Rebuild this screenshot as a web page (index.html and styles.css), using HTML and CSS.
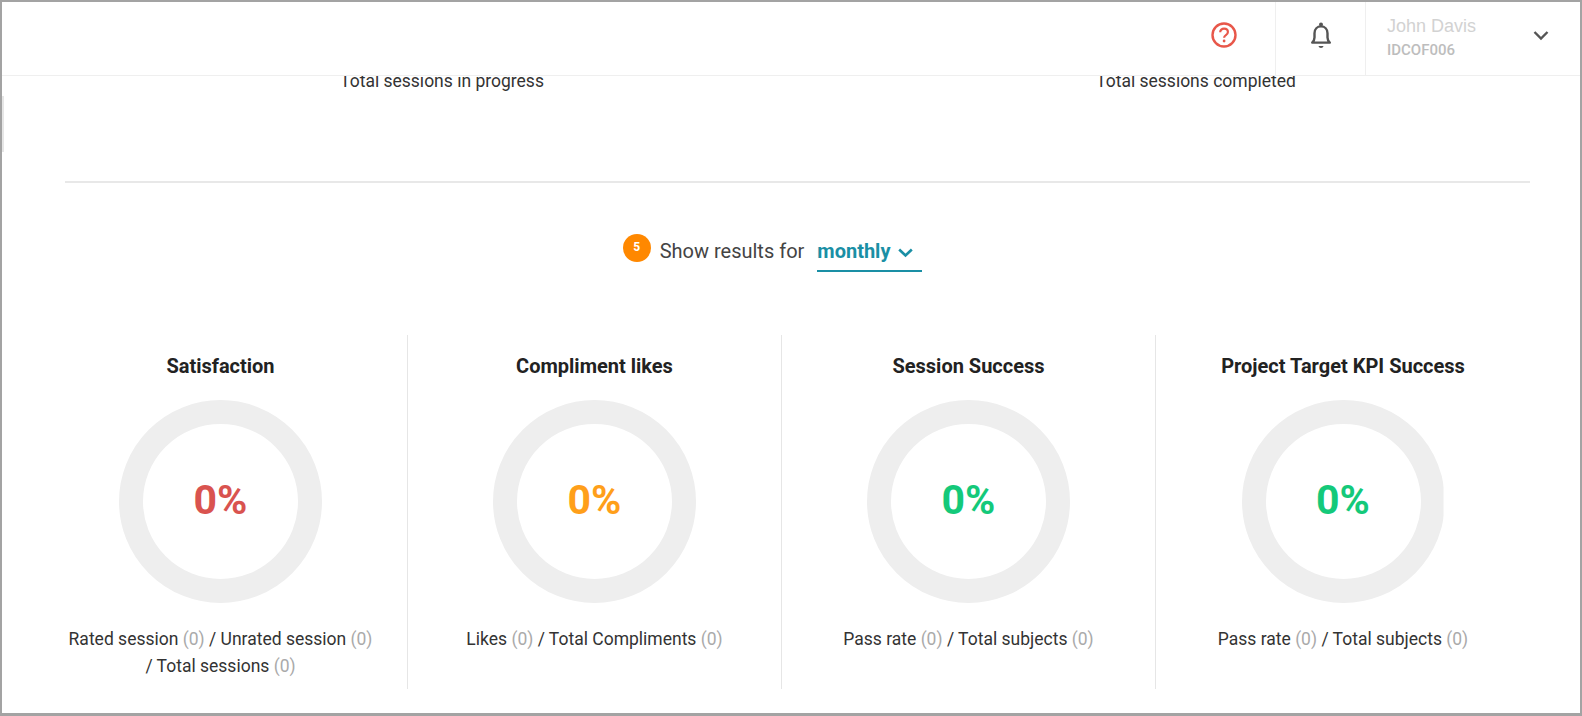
FILE: index.html
```html
<!DOCTYPE html>
<html lang="en">
<head>
    <meta charset="UTF-8">
    <meta name="viewport" content="width=device-width, initial-scale=1.0">
    <title>Dashboard</title>
    <link rel="stylesheet" href="styles.css">
</head>
<body>
<div class="frame">

    <div class="topbar">
        <div class="topbar-cell help-cell">
            <svg width="28" height="28" viewBox="0 0 28 28" fill="none">
                <circle cx="14" cy="14" r="11.5" stroke="#e8574a" stroke-width="2.4"/>
                <path d="M10.2 11.2c0-2.2 1.7-3.6 3.9-3.6s3.8 1.4 3.8 3.4c0 1.5-.8 2.3-2 3.1-1.1.7-1.8 1.3-1.8 2.7" stroke="#e8574a" stroke-width="2.2"/>
                <circle cx="14.1" cy="20" r="1.4" fill="#e8574a"/>
            </svg>
        </div>
        <div class="topbar-cell bell-cell">
            <svg width="24" height="28" viewBox="0 0 24 28" fill="none">
                <circle cx="12" cy="3.4" r="2" fill="#555"/>
                <path d="M3.2 21.6c1.5-1.4 2.300-2.600 2.300-5v-4.400c0-4 2.800-6.800 6.500-6.800s6.500 2.800 6.500 6.800v4.400c0 2.400.8 3.600 2.300 5z" stroke="#555" stroke-width="2.400" stroke-linejoin="round"/>
                <path d="M9.500 25h5c-.3 1.300-1.200 2-2.500 2s-2.200-.7-2.500-2z" fill="#555"/>
            </svg>
        </div>
        <div class="user-cell">
            <div class="user-text">
                <div class="user-name">John Davis</div>
                <div class="user-id">IDCOF006</div>
            </div>
            <svg width="16" height="11" viewBox="0 0 16 11" fill="none">
                <path d="M1.500 2l6.500 6.500 6.500-6.500" stroke="#555" stroke-width="2.400"/>
            </svg>
        </div>
    </div>

    <div class="side-tab"></div>

    <!-- Session totals -->
    <div class="totals">
        <p>Total sessions in progress</p>
        <p>Total sessions completed</p>
    </div>

    <hr class="divider">

    <!-- Period filter -->
    <div class="filter">
        <span class="step-badge">5</span>
        <span class="filter-label">Show results for</span>
        <span class="filter-select">
            monthly
            <svg width="15" height="10" viewBox="0 0 15 10" fill="none">
                <path d="M1.200 1.500l6.300 6 6.300-6" stroke="#1a8fa5" stroke-width="2.600"/>
            </svg>
        </span>
    </div>

    <!-- KPI gauges -->
    <div class="kpi-grid">
        <div class="kpi">
            <h3>Satisfaction</h3>
            <div class="ring"><span class="pct red">0%</span></div>
            <p class="kpi-note">Rated session <span class="count">(0)</span> / Unrated session <span class="count">(0)</span> / Total sessions <span class="count">(0)</span></p>
        </div>
        <div class="kpi">
            <h3>Compliment likes</h3>
            <div class="ring"><span class="pct orange">0%</span></div>
            <p class="kpi-note">Likes <span class="count">(0)</span> / Total Compliments <span class="count">(0)</span></p>
        </div>
        <div class="kpi">
            <h3>Session Success</h3>
            <div class="ring"><span class="pct green">0%</span></div>
            <p class="kpi-note">Pass rate <span class="count">(0)</span> / Total subjects <span class="count">(0)</span></p>
        </div>
        <div class="kpi">
            <h3>Project Target KPI Success</h3>
            <div class="ring"><span class="pct green">0%</span></div>
            <p class="kpi-note">Pass rate <span class="count">(0)</span> / Total subjects <span class="count">(0)</span></p>
        </div>
    </div>

</div>
</body>
</html>
```

FILE: styles.css
```css
/* body */
html, body {
    margin: 0;
    padding: 0;
    height: 100%;
    overflow: hidden;
    background-color: #fff;
    font-family: 'Roboto', sans-serif;
    color: #333;
}

/* Window frame */
.frame {
    position: relative;
    box-sizing: border-box;
    height: 716px;
    padding-top: 69px;
    border: 2px solid #a3a3a3;
    border-bottom-width: 3px;
    overflow: hidden;
    background-color: #fff;
}

/* Top bar */
.topbar {
    position: absolute;
    top: 0;
    left: 0;
    right: 0;
    z-index: 2;
    box-sizing: border-box;
    height: 74px;
    display: flex;
    justify-content: flex-end;
    background-color: #fff;
    border-bottom: 1px solid #efefef;
}

.topbar-cell {
    display: flex;
    align-items: center;
    justify-content: center;
    height: 100%;
    padding-bottom: 7px;
    box-sizing: border-box;
}

.help-cell {
    width: 95px;
    padding-right: 8px;
}

.bell-cell {
    width: 91px;
    border-left: 1px solid #efefef;
    border-right: 1px solid #efefef;
}

.user-cell {
    box-sizing: border-box;
    width: 214px;
    padding: 0 31px 1px 21px;
    display: flex;
    align-items: center;
    justify-content: space-between;
}

.user-cell svg {
    margin-bottom: 5px;
}

.user-name {
    font-family: 'Liberation Sans', Arial, sans-serif;
    font-size: 18px;
    line-height: 24px;
    color: #d2d2d2;
}

.user-id {
    font-size: 15px;
    line-height: 24px;
    font-weight: 500;
    color: #bdbdbd;
}

/* Small tab at the left edge */
.side-tab {
    position: absolute;
    top: 94px;
    left: 0;
    width: 2px;
    height: 56px;
    background-color: #e6e6e6;
}

/* Totals */
.totals {
    display: grid;
    grid-template-columns: 754px 754px;
    margin-left: 63px;
    text-align: center;
}

.totals p {
    margin: 0;
    font-size: 17.500px;
    line-height: 20px;
    color: #333;
}

.divider {
    margin: 90px 50px 0 63px;
    border: none;
    border-top: 2px solid #e8e8e8;
}

/* Filter */
.filter {
    display: flex;
    justify-content: center;
    align-items: center;
    height: 44px;
    margin-top: 45px;
    padding-right: 37px;
}

.step-badge {
    width: 28px;
    height: 28px;
    margin-right: 9px;
    margin-top: -4px;
    border-radius: 50%;
    background-color: #ff8800;
    color: #fff;
    font-size: 12px;
    font-weight: 700;
    line-height: 26px;
    text-align: center;
}

.filter-label {
    font-size: 20px;
    line-height: 26px;
    margin-top: 2px;
    color: #444;
    margin-right: 13px;
}

.filter-select {
    box-sizing: border-box;
    width: 105px;
    height: 44px;
    line-height: 46px;
    border-bottom: 2px solid #1a8fa5;
    font-size: 20px;
    font-weight: 700;
    color: #1a8fa5;
}

.filter-select svg {
    margin-left: 3px;
}

/* KPI grid */
.kpi-grid {
    display: grid;
    grid-template-columns: repeat(4, 374px);
    margin-top: 63px;
    margin-left: 32px;
}

.kpi {
    box-sizing: border-box;
    height: 354px;
    padding-top: 20px;
    text-align: center;
    border-right: 1px solid #e6e6e6;
}

.kpi:last-child {
    border-right: none;
}

.kpi:last-child .ring {
    clip-path: inset(0 1px 0 0);
}

.kpi h3 {
    margin: 0;
    font-size: 20px;
    line-height: 22px;
    font-weight: 700;
    color: #222;
}

.ring {
    box-sizing: border-box;
    width: 203px;
    height: 203px;
    margin: 23px auto 0;
    display: flex;
    align-items: center;
    justify-content: center;
    border: 24px solid #eee;
    border-radius: 50%;
}

.pct {
    font-size: 41px;
    font-weight: 700;
    margin-top: -4px;
}

.pct.red {
    color: #d9534f;
}

.pct.orange {
    color: #ff9f1a;
}

.pct.green {
    color: #14c97a;
}

.kpi-note {
    margin: 23px 30px 0;
    font-size: 17.500px;
    line-height: 27px;
    color: #333;
}

.count {
    color: #aaa;
}
```
